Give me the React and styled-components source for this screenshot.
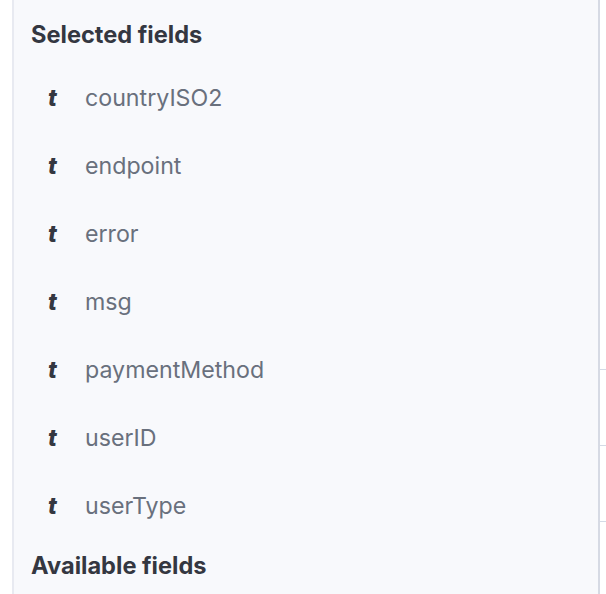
import React from 'react'
import styled, { createGlobalStyle } from 'styled-components'

const GlobalStyle = createGlobalStyle`
  html, body {
    margin: 0;
    padding: 0;
    background: #ffffff;
  }
  body {
    font-family: Inter, "Noto Sans", sans-serif;
  }
`

const Page = styled.div`
  display: flex;
  flex-direction: row;
  height: 594px;
  overflow: hidden;
`

const LeftGutter = styled.div`
  width: 12px;
  flex-shrink: 0;
  background: #ffffff;
`

const Panel = styled.div`
  width: 588px;
  flex-shrink: 0;
  box-sizing: border-box;
  background: #f8f9fc;
  border-left: 2px solid #e8eaf1;
  border-right: 2px solid #d6dae4;
  padding: 20px 0 0 17px;
`

const SectionTitle = styled.div`
  font-size: 23.6px;
  line-height: 30px;
  font-weight: 700;
  color: #343741;
  margin-top: ${p => p.$top || 0}px;
`

const FieldList = styled.div`
  display: flex;
  flex-direction: column;
  margin-top: 14px;
`

const FieldRow = styled.div`
  height: 68px;
  display: flex;
  flex-direction: row;
  align-items: center;
  padding-left: 17px;
`

const TypeIcon = styled.span`
  width: 37px;
  font-size: 23px;
  font-weight: 800;
  font-style: italic;
  color: #343741;
  line-height: 68px;
`

const FieldName = styled.span`
  font-size: 23.2px;
  line-height: 68px;
  color: #69707d;
`

const RightGutter = styled.div`
  width: 6px;
  flex-shrink: 0;
  display: flex;
  flex-direction: column;
  gap: 75px;
  padding-top: 369px;
`

const Tick = styled.div`
  height: 1px;
  background: #d3dae6;
`

const fields = ['countryISO2', 'endpoint', 'error', 'msg', 'paymentMethod', 'userID', 'userType']

export default function App() {
  return (
    <>
      <GlobalStyle />
      <Page>
        <LeftGutter />
        <Panel>
          <SectionTitle>Selected fields</SectionTitle>
          <FieldList>
            {fields.map(f => (
              <FieldRow key={f}>
                <TypeIcon>t</TypeIcon>
                <FieldName>{f}</FieldName>
              </FieldRow>
            ))}
          </FieldList>
          <SectionTitle $top={11}>Available fields</SectionTitle>
        </Panel>
        <RightGutter>
          <Tick />
          <Tick />
          <Tick />
        </RightGutter>
      </Page>
    </>
  )
}
